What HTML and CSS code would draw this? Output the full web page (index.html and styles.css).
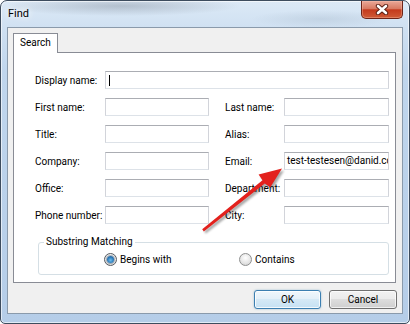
FILE: index.html
```html
<!DOCTYPE html>
<html lang="en">
<head>
  <meta charset="UTF-8">
  <title>Find</title>
  <link rel="stylesheet" href="styles.css">
</head>
<body>
  <div class="window">
    <div class="titlebar">
      <span class="title">Find</span>
      <div class="close">
        <svg width="14" height="11" viewBox="0 0 14 11">
          <path d="M3 2 L11 9 M11 2 L3 9" stroke="#5a1d12" stroke-width="4.4" stroke-linecap="round"/>
          <path d="M3 2 L11 9 M11 2 L3 9" stroke="#fff" stroke-width="2.6" stroke-linecap="round"/>
        </svg>
      </div>
    </div>

    <div class="client">
      <div class="tabs">
        <div class="tab">Search</div>
      </div>

      <div class="panel">
        <div class="form">
          <label>Display name:</label>
          <div class="box wide"><span class="caret"></span></div>

          <label>First name:</label>
          <div class="box"></div>
          <label class="second">Last name:</label>
          <div class="box"></div>

          <label>Title:</label>
          <div class="box"></div>
          <label class="second">Alias:</label>
          <div class="box"></div>

          <label>Company:</label>
          <div class="box"></div>
          <label class="second">Email:</label>
          <div class="box">test-testesen@danid.com</div>

          <label>Office:</label>
          <div class="box"></div>
          <label class="second">Department:</label>
          <div class="box"></div>

          <label>Phone number:</label>
          <div class="box"></div>
          <label class="second">City:</label>
          <div class="box"></div>
        </div>

        <fieldset class="group">
          <legend>Substring Matching</legend>
          <div class="radios">
            <div class="option"><span class="radio on"><span class="dot"></span></span>Begins with</div>
            <div class="option"><span class="radio"></span>Contains</div>
          </div>
        </fieldset>
      </div>

      <div class="buttons">
        <button class="btn ok">OK</button>
        <button class="btn cancel">Cancel</button>
      </div>
    </div>

    <!-- red annotation arrow pointing at the email box -->
    <svg class="arrow" width="410" height="324" viewBox="0 0 410 324">
      <defs>
        <filter id="soft" x="-10%" y="-10%" width="120%" height="120%">
          <feGaussianBlur stdDeviation="1.2"/>
        </filter>
      </defs>
      <polygon points="202.2,229.2 262.5,180.3 258.6,174.6 282,168.5 270.2,187.4 264.8,183.4 203.8,231.6"
               fill="rgba(0,0,0,0.35)" transform="translate(2 2)" filter="url(#soft)"/>
      <polygon points="202.2,229.2 262.5,180.3 258.6,174.6 282,168.5 270.2,187.4 264.8,183.4 203.8,231.6"
               fill="#e3211d"/>
    </svg>
  </div>
</body>
</html>
```

FILE: styles.css
```css
* {
  box-sizing: border-box;
}

body {
  margin: 0;
  width: 410px;
  height: 324px;
  overflow: hidden;
  background: #fff;
  font-family: Roboto, "Noto Sans", sans-serif;
  font-size: 10px;
  color: #000;
}

.window {
  position: relative;
  width: 410px;
  height: 324px;
  display: flex;
  flex-direction: column;
  padding: 0 6px 9px;
  border: 1px solid #3d4c5e;
  border-radius: 7px 7px 5px 5px;
  box-shadow: inset 0 0 0 1px rgba(255, 255, 255, 0.6);
  background:
    radial-gradient(ellipse 120px 10px at 120px 5px, rgba(90, 100, 115, 0.3), transparent),
    radial-gradient(ellipse 70px 9px at 320px 18px, rgba(120, 140, 160, 0.18), transparent),
    linear-gradient(180deg, #dce9f6 0, #d0e1f2 26px, #c0d6ed 70px, #b5cde8 100%);
}

.titlebar {
  height: 26px;
  display: flex;
  justify-content: space-between;
  align-items: flex-start;
}

.title {
  margin: 6px 0 0 1px;
  font-size: 11px;
  line-height: 14px;
  text-shadow: 0 0 6px #fff, 0 0 10px #fff;
}

.close {
  width: 42px;
  height: 18px;
  display: flex;
  align-items: center;
  justify-content: center;
  border: 1px solid #6d2418;
  border-top: none;
  border-radius: 0 0 5px 5px;
  background: linear-gradient(#eaa898, #d87a62 45%, #c43a1d 52%, #cf5b37 100%);
  box-shadow: inset 0 0 0 1px rgba(255, 200, 180, 0.35);
}

.client {
  flex: 1;
  display: flex;
  flex-direction: column;
  background: #f0f0f0;
  border: 1px solid #8a9aab;
}

.tabs {
  display: flex;
  padding: 5px 0 0 5px;
}

.tab {
  position: relative;
  z-index: 1;
  height: 20px;
  margin-bottom: -1px;
  padding: 0 6px;
  line-height: 18px;
  background: #fff;
  border: 1px solid #898c95;
  border-bottom: none;
}

.panel {
  margin: 0 6px 0 5px;
  padding: 18px 6px 7px 0;
  background: #fff;
  border: 1px solid #898c95;
}

.form {
  display: grid;
  grid-template-columns: 70px 104px 75px 105px;
  grid-auto-rows: 18px;
  row-gap: 9px;
  align-items: center;
  margin-left: 21px;
}

.form label {
  white-space: nowrap;
}

.form .second {
  padding-left: 16px;
}

.box {
  height: 18px;
  padding: 0 2px;
  line-height: 16px;
  white-space: nowrap;
  overflow: hidden;
  background: #fff;
  border: 1px solid;
  border-color: #abadb3 #d2d4da #dde2e8 #d2d4da;
}

.wide {
  grid-column: 2 / 5;
}

.caret {
  display: inline-block;
  width: 1px;
  height: 11px;
  margin: 3px 0 0 1px;
  vertical-align: top;
  background: #000;
}

.group {
  width: 351px;
  min-width: 0;
  margin: 11px 0 0 24px;
  padding: 4px 0 8px;
  border: 1px solid #d5dfe5;
  border-radius: 3px;
}

.group legend {
  margin-left: 5px;
  padding: 0 2px;
  line-height: 14px;
}

.radios {
  display: flex;
  align-items: center;
  height: 13px;
  margin-left: 65px;
}

.option {
  display: flex;
  align-items: center;
  gap: 3px;
  width: 135px;
}

.radio {
  width: 13px;
  height: 13px;
  display: flex;
  align-items: center;
  justify-content: center;
  border-radius: 50%;
  border: 1px solid #8e8f8f;
  background: radial-gradient(circle at 50% 35%, #fff, #e6e6e6 55%, #cdcdcd);
}

.radio.on {
  border-color: #555a60;
}

.dot {
  width: 7px;
  height: 7px;
  border-radius: 50%;
  background: radial-gradient(circle at 50% 60%, #6fc0ef, #2a78b8 55%, #1c4f82);
  box-shadow: 0 0 0 1px rgba(30, 60, 90, 0.35);
}

.buttons {
  display: flex;
  justify-content: flex-end;
  gap: 8px;
  margin: 7px 5px 0 0;
}

.btn {
  height: 19px;
  padding: 0;
  font: inherit;
  color: #000;
  border: 1px solid #707070;
  border-radius: 3px;
  background: linear-gradient(#f2f2f2, #ebebeb 45%, #dddddd 50%, #cfcfcf);
  box-shadow: inset 0 0 0 1px rgba(255, 255, 255, 0.7);
}

.ok {
  width: 67px;
  border-color: #3c7fb1;
  background: linear-gradient(#f0f7fc, #e4f0f9 45%, #d5e9f6 50%, #c6e1f3);
  box-shadow: inset 0 0 0 1px rgba(255, 255, 255, 0.8), 0 0 2px rgba(60, 127, 177, 0.5);
}

.cancel {
  width: 68px;
}

.arrow {
  position: absolute;
  left: -1px;
  top: -1px;
  pointer-events: none;
}
```
